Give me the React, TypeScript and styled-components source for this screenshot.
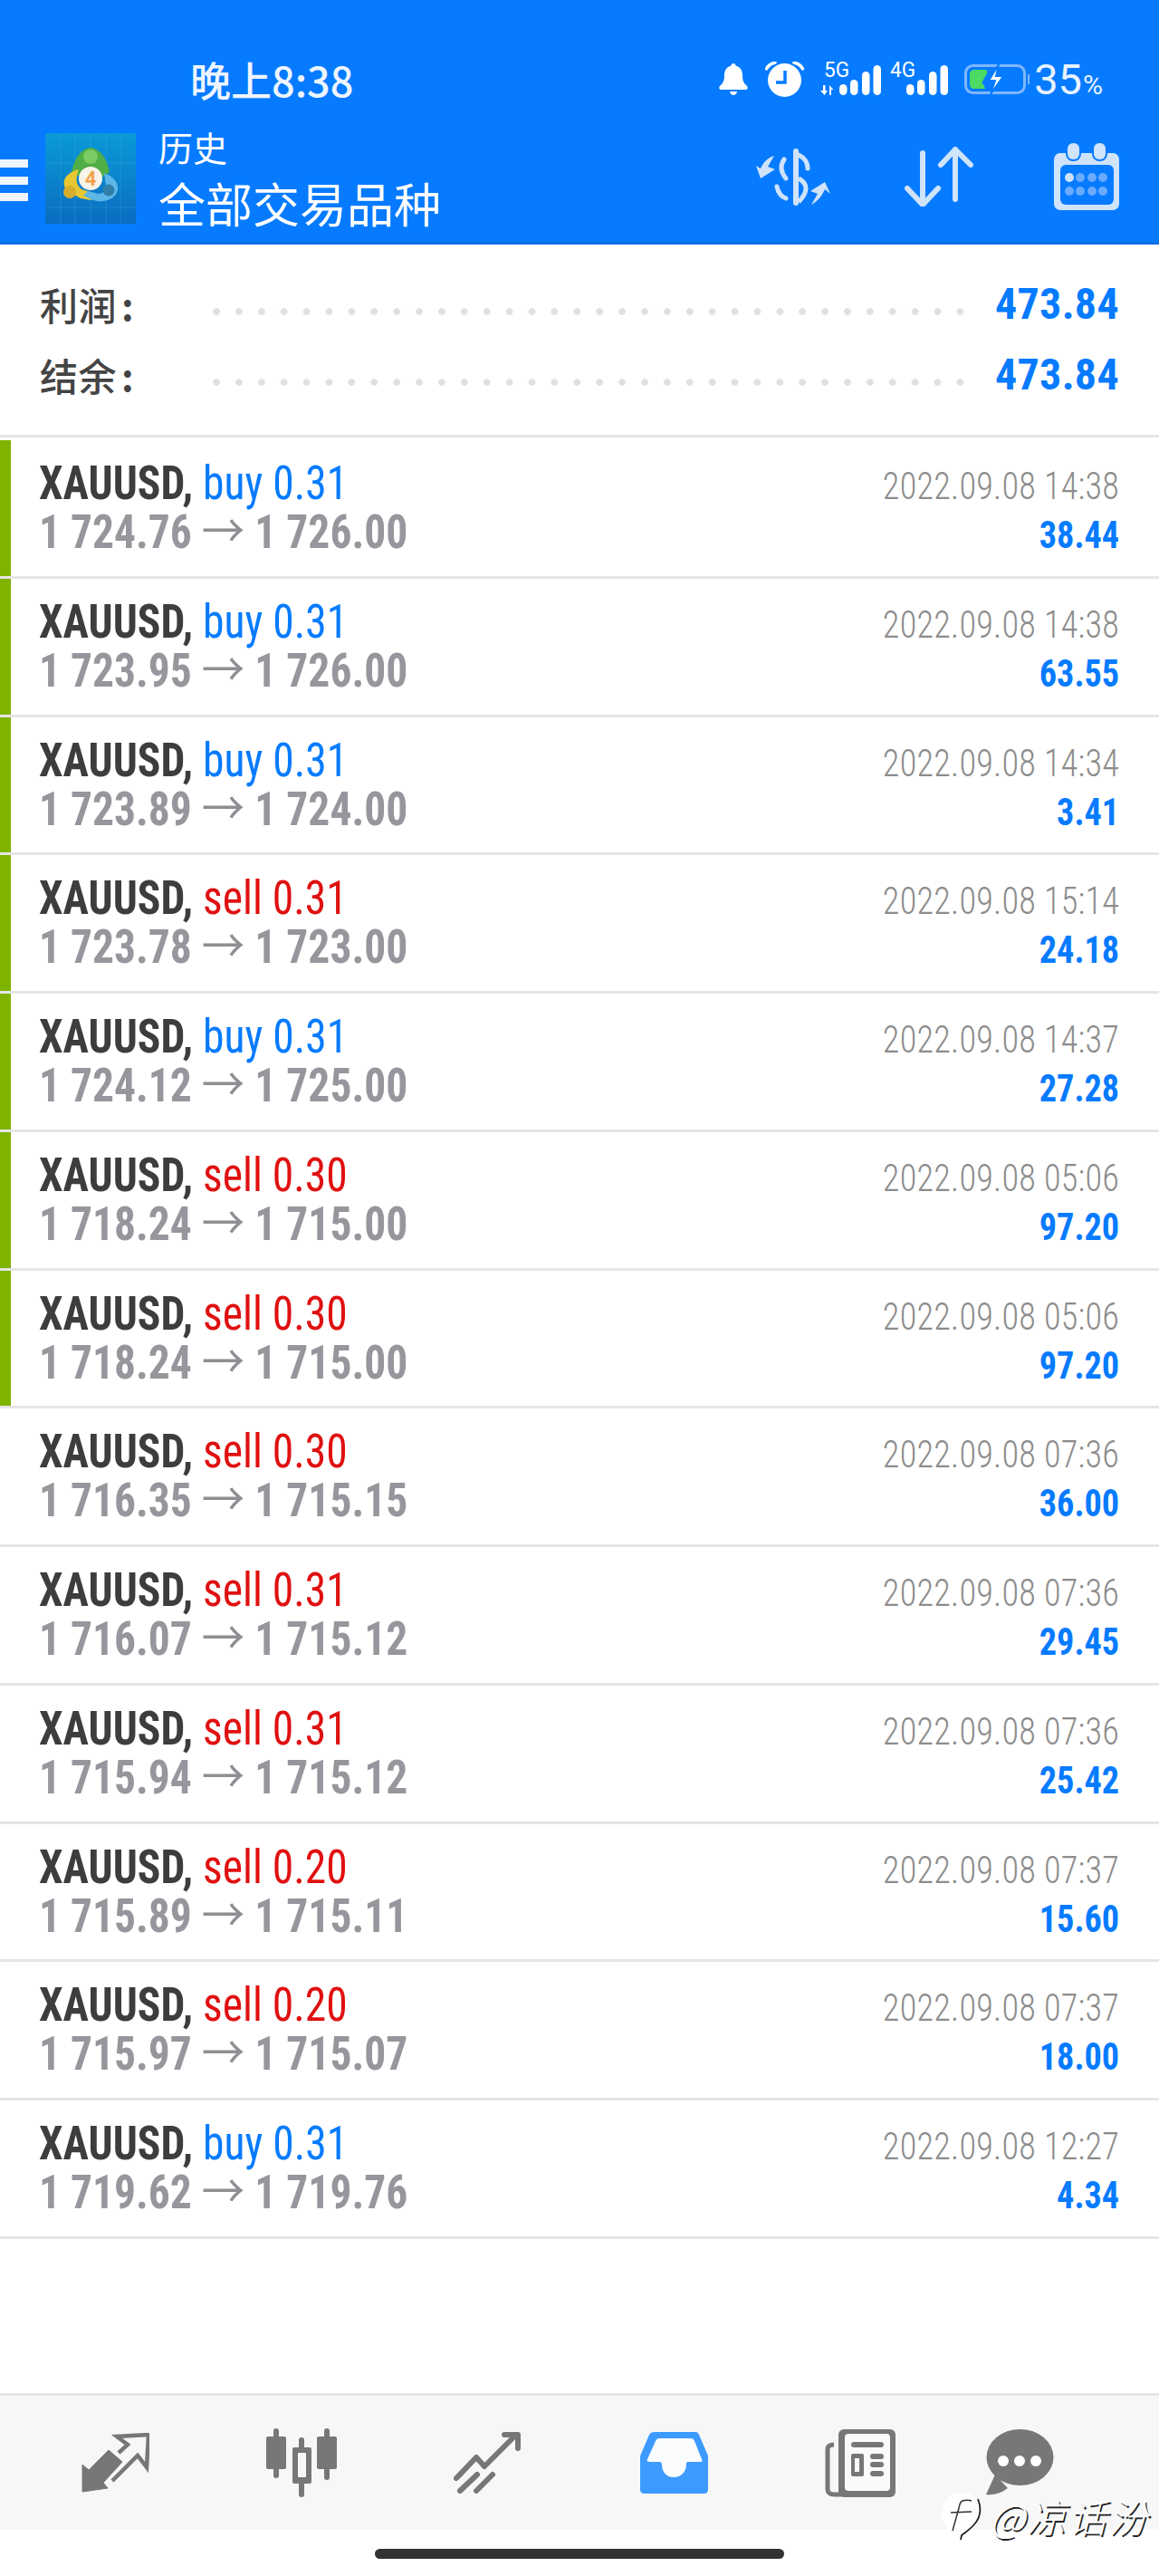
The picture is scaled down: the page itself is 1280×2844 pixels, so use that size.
import React from "react";
import styled, { createGlobalStyle } from "styled-components";

const Global = createGlobalStyle`
  html, body { margin: 0; padding: 0; background: #fff; }
  body { font-family: Roboto, "Noto Sans CJK SC", sans-serif; }
`;

const CJK = `"Noto Sans CJK SC", Roboto, sans-serif`;
const BLUE = "#067bff";

const Page = styled.div`
  position: relative;
  width: 1280px;
  height: 2844px;
  display: flex;
  flex-direction: column;
  overflow: hidden;
  background: #fff;
`;
const Header = styled.header`
  height: 267px;
  flex: none;
  background: ${BLUE};
  border-bottom: 3px solid #0a6fe6;
  color: #fff;
`;
const StatusBar = styled.div`
  height: 142px;
  padding: 32px 62px 0 210px;
  box-sizing: border-box;
  display: flex;
  align-items: center;
`;
const Clock = styled.span`
  font-family: ${CJK};
  font-size: 45px;
  font-weight: 500;
  color: #eef5ff;
  line-height: 1;
`;
const StatusIcons = styled.div`
  margin-left: auto;
  display: flex;
  align-items: center;
  svg { display: block; }
`;
const StatusItem = styled.div<{ $gap: number }>`
  margin-left: ${(p) => p.$gap}px;
`;
const Percent = styled.span`
  font-size: 47px;
  font-weight: 400;
  line-height: 1;
  color: #e8f2ff;
  small { font-size: 30px; margin-left: 1px; }
`;
const TitleBar = styled.div`
  display: flex;
  align-items: center;
  height: 125px;
`;
const Burger = styled.div`
  width: 31px;
  height: 46px;
  margin-top: -11px;
  flex: none;
  display: flex;
  flex-direction: column;
  justify-content: space-between;
  i { display: block; height: 9px; background: #eef5ff; }
`;
const Logo = styled.svg`
  width: 100px;
  height: 100px;
  margin: -16px 25px 0 19px;
  flex: none;
`;
const Titles = styled.div`
  font-family: ${CJK};
  margin-top: -14px;
`;
const Subtitle = styled.div`
  font-size: 38px;
  line-height: 44px;
  margin-bottom: 8px;
`;
const Title = styled.div`
  font-size: 52px;
  line-height: 64px;
`;
const Actions = styled.div`
  margin-left: auto;
  margin-top: -19px;
  padding-right: 44px;
  display: flex;
  align-items: center;
  gap: 82px;
  svg { display: block; }
  svg:last-child { margin-left: 6px; }
`;
const Summary = styled.section`
  height: 213px;
  flex: none;
  box-sizing: border-box;
  padding: 26px 44px 0 44px;
  border-bottom: 3px solid #e5e5e5;
`;
const SummaryRow = styled.div`
  height: 78px;
  display: flex;
  align-items: center;
`;
const SummaryLabel = styled.span`
  font-family: ${CJK};
  font-size: 42px;
  font-weight: 500;
  color: #444;
  width: 191px;
  flex: none;
  letter-spacing: 0.5px;
  b { font-weight: 700; margin-left: 5px; }
`;
const Dots = styled.span`
  width: 830px;
  height: 8px;
  flex: none;
  margin-top: 18px;
  background: radial-gradient(circle at 4px 4px, #e0e0e0 3.5px, transparent 4px) 0 0 / 24.9px 8px repeat-x;
`;
const SummaryValue = styled.span`
  margin-left: auto;
  font-size: 48px;
  font-weight: 700;
  color: ${BLUE};
  font-stretch: 75%;
  letter-spacing: 0.3px;
`;
const RowList = styled.div`
  flex: none;
  padding-top: 3px;
`;
const Row = styled.div`
  height: 152.75px;
  box-sizing: border-box;
  display: flex;
  border-bottom: 3px solid #e5e5e5;
`;
const RowBar = styled.div<{ $on: boolean }>`
  width: 12px;
  flex: none;
  background: ${(p) => (p.$on ? "#7fb300" : "transparent")};
`;
const RowLeft = styled.div`
  margin-left: 31px;
  padding-top: 21px;
  font-size: 51px;
  line-height: 54px;
  font-stretch: 75%;
  transform: scaleX(0.932);
  transform-origin: left top;
  white-space: nowrap;
`;
const Symbol = styled.span`
  font-weight: 700;
  color: #3d3d3d;
`;
const Side = styled.span<{ $buy: boolean }>`
  color: ${(p) => (p.$buy ? BLUE : "#e01010")};
`;
const Prices = styled.div`
  font-weight: 700;
  color: #96969c;
`;
const Arrow = styled.span`
  font-weight: 400;
  color: #8e8e93;
`;
const RowRight = styled.div`
  margin-left: auto;
  margin-right: 44px;
  padding-top: 24px;
  text-align: right;
  font-stretch: 75%;
  font-size: 42px;
  line-height: 54px;
  transform: scaleX(0.91);
  transform-origin: right top;
  white-space: nowrap;
`;
const DateText = styled.div`
  font-weight: 300;
  color: #8c8c8c;
  letter-spacing: 0.25px;
`;
const Profit = styled.div`
  font-weight: 700;
  color: ${BLUE};
`;
const Spacer = styled.div`
  flex: 1;
  border-bottom: 3px solid #e5e5e5;
`;
const TabBar = styled.nav`
  height: 148px;
  flex: none;
  background: #f7f7f7;
  padding-left: 25px;
  display: grid;
  grid-template-columns: repeat(5, 205.5px) 147px;
  align-items: center;
  svg { display: block; margin: 0 auto; }
`;
const HomeArea = styled.div`
  height: 51px;
  flex: none;
  display: flex;
  justify-content: center;
  padding-top: 21px;
  box-sizing: border-box;
`;
const HomeBar = styled.div`
  width: 452px;
  height: 11px;
  border-radius: 6px;
  background: #333;
`;
const Watermark = styled.div`
  position: absolute;
  left: 1040px;
  top: 2751px;
  display: flex;
  align-items: flex-start;
  gap: 9px;
  font-family: ${CJK};
  font-size: 43px;
  font-weight: 300;
  font-style: italic;
  line-height: 52px;
  letter-spacing: 2px;
  color: #fff;
  text-shadow: 1.5px 1.5px 0 #222;
  white-space: nowrap;
`;

const rows = [
  ["buy 0.31", "1 724.76", "1 726.00", "2022.09.08 14:38", "38.44", 1],
  ["buy 0.31", "1 723.95", "1 726.00", "2022.09.08 14:38", "63.55", 1],
  ["buy 0.31", "1 723.89", "1 724.00", "2022.09.08 14:34", "3.41", 1],
  ["sell 0.31", "1 723.78", "1 723.00", "2022.09.08 15:14", "24.18", 1],
  ["buy 0.31", "1 724.12", "1 725.00", "2022.09.08 14:37", "27.28", 1],
  ["sell 0.30", "1 718.24", "1 715.00", "2022.09.08 05:06", "97.20", 1],
  ["sell 0.30", "1 718.24", "1 715.00", "2022.09.08 05:06", "97.20", 1],
  ["sell 0.30", "1 716.35", "1 715.15", "2022.09.08 07:36", "36.00", 0],
  ["sell 0.31", "1 716.07", "1 715.12", "2022.09.08 07:36", "29.45", 0],
  ["sell 0.31", "1 715.94", "1 715.12", "2022.09.08 07:36", "25.42", 0],
  ["sell 0.20", "1 715.89", "1 715.11", "2022.09.08 07:37", "15.60", 0],
  ["sell 0.20", "1 715.97", "1 715.07", "2022.09.08 07:37", "18.00", 0],
  ["buy 0.31", "1 719.62", "1 719.76", "2022.09.08 12:27", "4.34", 0],
] as const;

const Bell = () => (
  <svg width="32" height="35" viewBox="0 0 32 35" fill="#fff">
    <path d="M16 0c1.500 0 2.500 1 2.500 2.500C24 4 26 8 26 13c0 6 1.500 9 5 12 1 1 1 4-1 4H2c-2 0-2-3-1-4 3.500-3 5-6 5-12 0-5 2-9 7.500-10.500C13.500 1 14.500 0 16 0z" />
    <path d="M12 31h8c-.5 2.500-2 4-4 4s-3.500-1.500-4-4z" />
  </svg>
);
const Alarm = () => (
  <svg width="43" height="39" viewBox="0 0 43 39" fill="#fff">
    <circle cx="21.500" cy="20.500" r="18.500" />
    <path d="M1.500 8C3 5 7 2 11 1M41.500 8C40 5 36 2 32 1" fill="none" stroke="#fff" strokeWidth="3.500" strokeLinecap="round" />
    <path d="M22 10v13H12" fill="none" stroke={BLUE} strokeWidth="3.500" />
  </svg>
);
const Signal = ({ label, tiny }: { label: string; tiny?: boolean }) => (
  <svg width={tiny ? 68 : 64} height="44" viewBox={`${tiny ? 0 : 4} -6 ${tiny ? 68 : 64} 44`} fill="#fff" style={{ marginTop: -6 }}>
    <text x={tiny ? 5 : 4} y="17" fontFamily="Roboto, sans-serif" fontSize="23" textLength="28" lengthAdjust="spacingAndGlyphs">{label}</text>
    {tiny && <path d="M4 26h2.500v6H9l-3.500 5L1 32h3zM11 37v-11l4.500 5H13v6z" />}
    <rect x="22" y="25" width="8.500" height="12" rx="4.250" />
    <rect x="34" y="20" width="8.500" height="17" rx="4.250" />
    <rect x="47" y="11" width="8.500" height="26" rx="4.250" />
    <rect x="59.500" y="4" width="8.500" height="33" rx="4.250" />
  </svg>
);
const Battery = () => (
  <svg width="73" height="33" viewBox="0 0 73 33">
    <rect x="1.500" y="1.500" width="65" height="30" rx="8" fill="none" stroke="#7fb6fc" strokeWidth="3" />
    <path d="M11 6h12c2 0 3 2 2 4l-5 9c-1 2 0 3 1 3l2 5H11c-3 0-5-2-5-5V11c0-3 2-5 5-5z" fill="#4cd964" />
    <path d="M71 11v11" stroke="#7fb6fc" strokeWidth="2" />
    <path d="M38 0L27 18h7l-5 15 14-20h-8z" fill="#fff" stroke={BLUE} strokeWidth="2" />
  </svg>
);
const Exchange = () => (
  <svg width="82" height="63" viewBox="0 0 82 63" fill="#cfe3fb">
    <rect x="41" y="0" width="6" height="63" rx="3" />
    <path d="M47 7Q57 12 57 22" fill="none" stroke="#cfe3fb" strokeWidth="5" strokeLinecap="round" />
    <path d="M31 12Q24 22 33 33" fill="none" stroke="#cfe3fb" strokeWidth="5" strokeLinecap="round" />
    <path d="M47 33Q63 42 47 59" fill="none" stroke="#cfe3fb" strokeWidth="5" />
    <path d="M23 42Q25 52 33 55" fill="none" stroke="#cfe3fb" strokeWidth="5" strokeLinecap="round" />
    <path d="M20 8L13 20l8 3L5 33 0 19l5 3C8 15 13 10 20 8z" />
    <path d="M61 62l7-12-8-3 16-10 6 13-6-5c-3 7-8 13-15 17z" />
  </svg>
);
const SortIcon = () => (
  <svg width="77" height="66" viewBox="0 0 77 66" fill="none" stroke="#cfe3fb" strokeWidth="6" strokeLinecap="round" strokeLinejoin="round">
    <path d="M20 7v57M3 46l17 18 17-18" />
    <path d="M56 58V3M40 20L56 3l17 17" />
  </svg>
);
const Calendar = () => (
  <svg width="72" height="74" viewBox="0 0 72 74">
    <rect x="0" y="11" width="72" height="63" rx="7" fill="#cfe3fb" />
    <rect x="13" y="-2" width="17" height="22" rx="8" fill={BLUE} />
    <rect x="42" y="-2" width="17" height="22" rx="8" fill={BLUE} />
    <rect x="15" y="0" width="13" height="18" rx="6" fill="#cfe3fb" />
    <rect x="44" y="0" width="13" height="18" rx="6" fill="#cfe3fb" />
    <rect x="7" y="24" width="59" height="44" rx="6" fill={BLUE} />
    {[17, 29, 42, 54].map((x, i) => (
      <circle key={x} cx={x} cy="38" r="5" fill={i === 0 ? "#cfe3fb" : "#6aaaff"} />
    ))}
    {[17, 29, 42, 54].map((x) => (
      <circle key={x} cx={x} cy="53" r="5" fill="#6aaaff" />
    ))}
  </svg>
);
const TradeIcon = () => (
  <svg width="75" height="66" viewBox="0 0 75 66">
    <path d="M1 35l7 6L30 19l15 13-21 23 5 6-28 4z" fill="#777" stroke="#777" strokeWidth="1" strokeLinejoin="round" />
    <path d="M34 53L62 25l10 13L74 2 39 4l12 9-10 9" fill="none" stroke="#777" strokeWidth="4.500" />
  </svg>
);
const CandleIcon = () => (
  <svg width="78" height="76" viewBox="0 0 78 76" fill="#777">
    <rect x="8" y="0" width="6" height="55" rx="3" />
    <rect x="0" y="9" width="22" height="36" rx="2" />
    <rect x="36" y="10" width="6" height="66" rx="3" />
    <rect x="29" y="21" width="21" height="40" rx="2" />
    <rect x="35" y="27" width="9" height="27" rx="1" fill="#f7f7f7" />
    <rect x="64" y="0" width="6" height="57" rx="3" />
    <rect x="56" y="9" width="22" height="36" rx="2" />
  </svg>
);
const ChartIcon = () => (
  <svg width="75" height="68" viewBox="0 0 75 68" fill="none" stroke="#777" strokeWidth="6" strokeLinecap="round" strokeLinejoin="round">
    <path d="M3 51l22-23 9 10L69 3" />
    <path d="M56 3h15v15" />
    <path d="M7 65l19-18M25 65l18-18" />
  </svg>
);
const InboxIcon = () => (
  <svg width="75" height="68" viewBox="0 0 75 68">
    <path d="M16 0h45c2 0 3 1 4 3l9 21c1 2 1 3 1 5v35c0 2-2 4-4 4H4c-2 0-4-2-4-4V29c0-2 0-3 1-5l9-21c1-2 3-3 6-3z" fill="#3d9bff" />
    <path d="M21 7h35c2 0 3 1 4 3l8 20c1 2 0 3-2 3H53c-2 0-2 1-2 3 0 8-6 14-14 14s-13-6-13-14c0-2-1-3-3-3H11c-3 0-4-1-3-3l9-20c1-2 2-3 4-3z" fill="#fbfcfe" />
  </svg>
);
const NewsIcon = () => (
  <svg width="78" height="75" viewBox="0 0 78 75">
    <rect x="15" y="0" width="63" height="75" rx="6" fill="#777" />
    <rect x="22" y="5" width="50" height="63" rx="4" fill="#fafafa" />
    <path d="M10 17C6 17 3 18 3 22v44c0 4 3 6 7 6h8" fill="none" stroke="#777" strokeWidth="5" />
    <rect x="29" y="14" width="36" height="6" rx="3" fill="#777" />
    <rect x="29" y="27" width="14" height="25" rx="2" fill="#777" />
    <rect x="33" y="32" width="5" height="15" fill="#fafafa" />
    {[27, 36, 46].map((y) => (
      <rect key={y} x="50" y={y} width="15" height="6" rx="3" fill="#777" />
    ))}
  </svg>
);
const ChatIcon = () => (
  <svg width="75" height="74" viewBox="0 0 75 74">
    <ellipse cx="37.500" cy="31" rx="37" ry="31" fill="#777" />
    <path d="M10 50L0 72c8 1 16-1 24-7z" fill="#777" />
    {[19, 37, 55].map((x) => (
      <circle key={x} cx={x} cy="35" r="6" fill="#fff" />
    ))}
  </svg>
);
const McLogo = () => (
  <Logo viewBox="0 0 100 100">
    <defs>
      <linearGradient id="lg" x1="0" y1="0" x2="0" y2="1">
        <stop offset="0" stopColor="#0a9ad8" />
        <stop offset="1" stopColor="#0a6cc0" />
      </linearGradient>
    </defs>
    <rect width="100" height="100" fill="url(#lg)" />
    <path d="M17 0v100M33 0v100M50 0v100M67 0v100M83 0v100M0 33h100M0 82h100" stroke="#4fb4e4" strokeWidth="0.700" opacity="0.4" />
    <path d="M50 16c10 1 18 11 21 27l-9 6-24-1-9-5c3-16 11-26 21-27z" fill="#4fae46" />
    <circle cx="50" cy="26" r="8" fill="#7ccb62" />
    <path d="M37 40C25 43 19 50 21 58c1 4 4 6 4 6l14 8 12 2 2-8-13-4c-6-5-7-11-3-22z" fill="#e8c832" />
    <circle cx="27" cy="65" r="7" fill="#d9ae2c" />
    <path d="M65 44c11 4 16 11 15 19-2 9-14 15-27 11l-11-5 5-5 12 3c7-1 9-5 8-10z" fill="#5cb6e6" />
    <circle cx="70" cy="63" r="6.500" fill="#2f7fa8" />
    <circle cx="50" cy="50" r="13" fill="#f8f3e8" />
    <text x="50" y="58" textAnchor="middle" fontFamily="Roboto, sans-serif" fontWeight="700" fontSize="22" fill="#f2a24a">4</text>
  </Logo>
);
const FanLogo = () => (
  <svg width="44" height="54" viewBox="0 0 44 54">
    <path d="M22 1C36 1 44 11 43 24c-1 10-8 18-18 24-1 1-2 3-3 5 0-2 0-4 0-5C8 47 0 36 0 24 0 11 9 1 22 1z" fill="#fff" />
    <path d="M33 10c-2-1-7-1-10 0-3 1-3 4-4 8l-7 25M10 23l23-1" fill="none" stroke="#333" strokeWidth="1.500" />
    <path d="M40 8c4 10 3 20-4 28-4 5-9 8-14 12l-1 5" fill="none" stroke="#222" strokeWidth="1.800" />
  </svg>
);

export default function App() {
  return (
    <Page>
      <Global />
      <Header>
        <StatusBar>
          <Clock>晚上8:38</Clock>
          <StatusIcons>
            <StatusItem $gap={0}><Bell /></StatusItem>
            <StatusItem $gap={19}><Alarm /></StatusItem>
            <StatusItem $gap={17}><Signal label="5G" tiny /></StatusItem>
            <StatusItem $gap={10}><Signal label="4G" /></StatusItem>
            <StatusItem $gap={18}><Battery /></StatusItem>
            <StatusItem $gap={4}><Percent>35<small>%</small></Percent></StatusItem>
          </StatusIcons>
        </StatusBar>
        <TitleBar>
          <Burger><i /><i /><i /></Burger>
          <McLogo />
          <Titles>
            <Subtitle>历史</Subtitle>
            <Title>全部交易品种</Title>
          </Titles>
          <Actions>
            <Exchange />
            <SortIcon />
            <Calendar />
          </Actions>
        </TitleBar>
      </Header>
      <Summary>
        <SummaryRow>
          <SummaryLabel>利润<b>:</b></SummaryLabel>
          <Dots />
          <SummaryValue>473.84</SummaryValue>
        </SummaryRow>
        <SummaryRow>
          <SummaryLabel>结余<b>:</b></SummaryLabel>
          <Dots />
          <SummaryValue>473.84</SummaryValue>
        </SummaryRow>
      </Summary>
      <RowList>
        {rows.map((r, i) => (
          <Row key={i}>
            <RowBar $on={r[5] === 1} />
            <RowLeft>
              <div>
                <Symbol>XAUUSD,</Symbol> <Side $buy={r[0].startsWith("buy")}>{r[0]}</Side>
              </div>
              <Prices>{r[1]} <Arrow>→</Arrow> {r[2]}</Prices>
            </RowLeft>
            <RowRight>
              <DateText>{r[3]}</DateText>
              <Profit>{r[4]}</Profit>
            </RowRight>
          </Row>
        ))}
      </RowList>
      <Spacer />
      <TabBar>
        <TradeIcon />
        <CandleIcon />
        <ChartIcon />
        <InboxIcon />
        <NewsIcon />
        <ChatIcon />
      </TabBar>
      <HomeArea><HomeBar /></HomeArea>
      <Watermark>
        <FanLogo />
        <span>@凉话汾</span>
      </Watermark>
    </Page>
  );
}
